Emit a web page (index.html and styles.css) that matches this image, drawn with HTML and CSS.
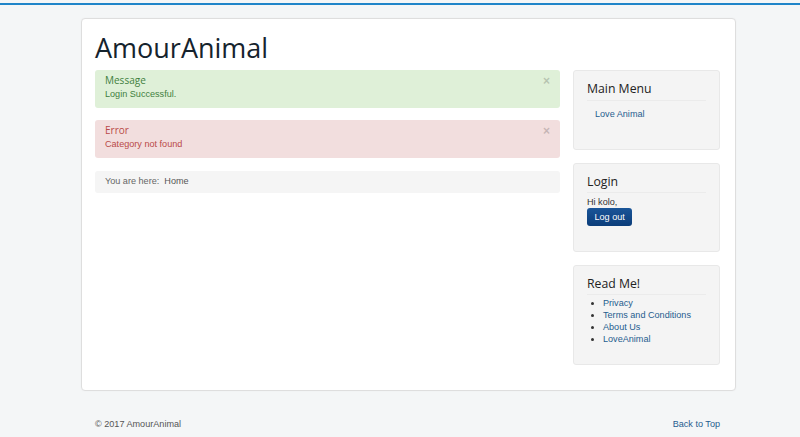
FILE: index.html
```html
<!DOCTYPE html>
<html lang="en">
<head>
  <meta charset="UTF-8">
  <meta name="viewport" content="width=device-width, initial-scale=1.0">
  <title>AmourAnimal - Home</title>
  <link rel="stylesheet" href="styles.css">
</head>
<body>
  <div class="body-wrap">
    <div class="site-header">
      <a class="brand" href="#">AmourAnimal</a>
    </div>

    <div class="row">
      <main class="main-col">
        <div class="alert alert-success">
          <a class="close" href="#">×</a>
          <h4 class="alert-heading">Message</h4>
          <div class="alert-message">Login Successful.</div>
        </div>

        <div class="alert alert-error">
          <a class="close" href="#">×</a>
          <h4 class="alert-heading">Error</h4>
          <div class="alert-message">Category not found</div>
        </div>

        <ul class="breadcrumb">
          <li class="crumb-label">You are here: &nbsp;</li>
          <li class="active">Home</li>
        </ul>
      </main>

      <aside class="side-col">
        <div class="well">
          <h3 class="page-header">Main Menu</h3>
          <ul class="nav-menu">
            <li><a href="#">Love Animal</a></li>
          </ul>
        </div>

        <div class="well">
          <h3 class="page-header">Login</h3>
          <div class="login-greeting">Hi kolo,</div>
          <button class="btn-primary" type="button">Log out</button>
        </div>

        <div class="well">
          <h3 class="page-header">Read Me!</h3>
          <ul class="link-list">
            <li><a href="#">Privacy</a></li>
            <li><a href="#">Terms and Conditions</a></li>
            <li><a href="#">About Us</a></li>
            <li><a href="#">LoveAnimal</a></li>
          </ul>
        </div>
      </aside>
    </div>
  </div>

  <footer class="footer">
    <p>&copy; 2017 AmourAnimal</p>
    <a href="#top" class="back-top">Back to Top</a>
  </footer>
</body>
</html>
```

FILE: styles.css
```css
html {
  background-color: #f4f6f7;
}

body {
  margin: 3px 0 0 0;
  padding: 0;
  border-top: 2px solid #1f85c9;
  font-family: 'Liberation Sans', Arial, sans-serif;
  font-size: 9.1px;
  line-height: 12.6px;
  color: #333;
}

a {
  color: #1f5d8f;
  text-decoration: none;
}

.body-wrap {
  width: 627px;
  margin: 13px 0 0 81px;
  padding: 12px 13px;
  background-color: #fff;
  border: 1px solid #dedede;
  border-radius: 4px;
  box-shadow: 0 0 2px rgba(0, 0, 0, 0.04);
}

.site-header {
  margin-bottom: 5px;
}

.brand {
  font-family: 'Open Sans', sans-serif;
  font-size: 27px;
  line-height: 34px;
  color: #15232d;
  display: block;
}

.row {
  display: grid;
  grid-template-columns: 465px 147px;
  column-gap: 13px;
}

/* alerts */
.alert {
  padding: 4px 24px 7px 10px;
  margin-bottom: 12.6px;
  border-radius: 3px;
}

.alert-heading {
  font-family: 'Open Sans', sans-serif;
  font-size: 10px;
  font-weight: normal;
  line-height: 12.6px;
  margin: 0 0 1.5px 0;
}

.alert-success {
  background-color: #dff0d8;
  color: #3f7f40;
}

.alert-error {
  background-color: #f2dede;
  color: #b94a48;
}

.close {
  float: right;
  margin-right: -14px;
  margin-top: 0;
  font-size: 12px;
  font-weight: bold;
  line-height: 14px;
  color: #000;
  opacity: 0.18;
}

.breadcrumb {
  list-style: none;
  margin: 0;
  padding: 4.7px 10px;
  background-color: #f5f5f5;
  border-radius: 3px;
  display: flex;
  color: #555;
}

.crumb-label {
  color: #666;
  margin-right: 0;
}

/* sidebar */
.well {
  padding: 11px 13px;
  margin-bottom: 13px;
  background-color: #f4f4f4;
  border: 1px solid #e8e8e8;
  border-radius: 3px;
}

.page-header {
  font-family: 'Open Sans', sans-serif;
  font-size: 12.25px;
  font-weight: normal;
  line-height: 14px;
  color: #222;
  margin: 0 0 3px 0;
  padding-bottom: 3.5px;
  border-bottom: 1px solid #ebebeb;
}

.nav-menu {
  list-style: none;
  margin: 0 0 13.4px 0;
  padding: 0;
}

.nav-menu a {
  display: block;
  padding: 4.5px 8px 4px;
}

.login-greeting {
  line-height: 12px;
}

.btn-primary {
  display: inline-block;
  margin: 0 0 14px 0;
  padding: 2.4px 7.5px;
  font-family: 'Liberation Sans', Arial, sans-serif;
  font-size: 9.1px;
  line-height: 12.6px;
  color: #fff;
  background: linear-gradient(#1a5598, #0b3d7a);
  border: 0;
  border-radius: 3px;
  cursor: pointer;
}

.link-list {
  margin: -1px 0 7.5px 0;
  padding-left: 16px;
  line-height: 12px;
}

.link-list li {
  font-size: 9.1px;
}

/* footer */
.footer {
  width: 625px;
  margin: 27px 0 0 81px;
  padding: 0 14px;
  display: flex;
  justify-content: space-between;
  color: #555;
}

.footer p {
  margin: 0;
}
```
